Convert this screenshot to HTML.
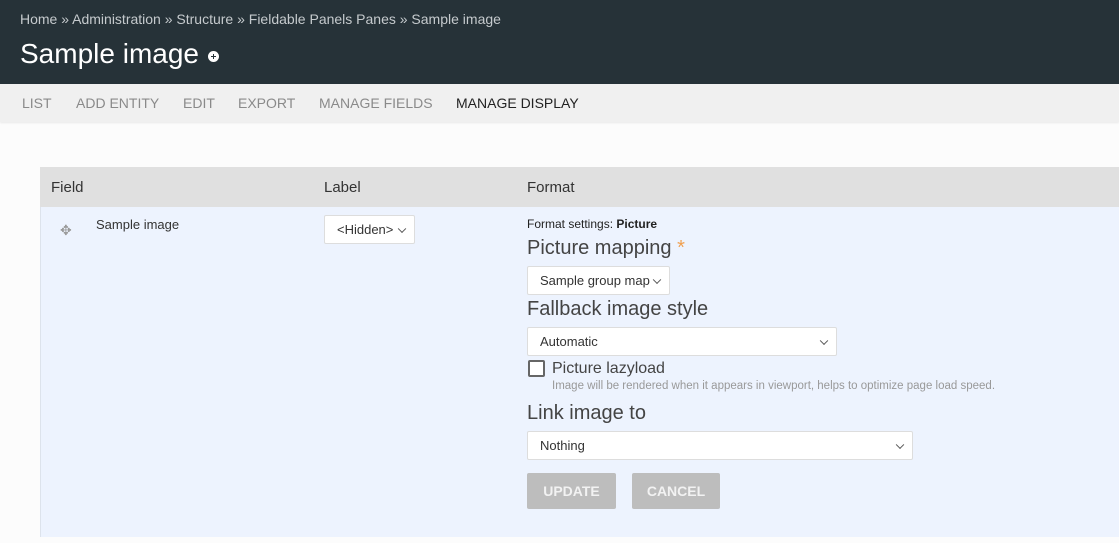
<!DOCTYPE html>
<html><head><style>
*{margin:0;padding:0;box-sizing:border-box}
body{width:1119px;height:543px;overflow:hidden;background:#fcfcfc;font-family:"Liberation Sans",sans-serif;position:relative}
.a{position:absolute;white-space:nowrap}
.sel{position:absolute;background:#fff;border:1px solid #ddd;border-radius:2px;font-size:13px;color:#333;padding-left:12px;display:flex;align-items:center}
.sel:after{content:"";position:absolute;right:9px;top:50%;width:5px;height:5px;border-right:1.5px solid #555;border-bottom:1.5px solid #555;transform:translateY(-70%) rotate(45deg)}
.btn{position:absolute;background:#bdbdbd;color:#f2f2f2;font-size:14px;font-weight:bold;display:flex;align-items:center;justify-content:center;border-radius:2px}
.h{font-size:20px;color:#444}
</style></head><body>
<div class="a" style="left:0;top:0;width:1119px;height:84px;background:#263238"></div>
<div class="a" style="left:20px;top:11px;font-size:14px;color:#c5cacd">Home » Administration » Structure » Fieldable Panels Panes » Sample image</div>
<div class="a" style="left:20px;top:38px;font-size:28px;color:#fff">Sample image</div>
<div class="a" style="left:208px;top:51px;width:11px;height:11px;border-radius:50%;background:#fff"></div>
<div class="a" style="left:211px;top:55.8px;width:5px;height:1.5px;background:#263238"></div>
<div class="a" style="left:212.8px;top:54px;width:1.5px;height:5px;background:#263238"></div>
<div class="a" style="left:0;top:84px;width:1119px;height:38px;background:#f0f0f0;box-shadow:0 1px 2px rgba(0,0,0,.08)"></div>
<div class="a" style="left:22px;top:95px;font-size:14px;color:#8a8a8a">LIST</div>
<div class="a" style="left:76px;top:95px;font-size:14px;color:#8a8a8a">ADD ENTITY</div>
<div class="a" style="left:183px;top:95px;font-size:14px;color:#8a8a8a">EDIT</div>
<div class="a" style="left:238px;top:95px;font-size:14px;color:#8a8a8a">EXPORT</div>
<div class="a" style="left:319px;top:95px;font-size:14px;color:#8a8a8a">MANAGE FIELDS</div>
<div class="a" style="left:456px;top:95px;font-size:14px;color:#222">MANAGE DISPLAY</div>
<div class="a" style="left:40px;top:167px;width:1079px;height:40px;background:#e0e0e0"></div>
<div class="a" style="left:51px;top:179px;font-size:15px;color:#333">Field</div>
<div class="a" style="left:324px;top:179px;font-size:15px;color:#333">Label</div>
<div class="a" style="left:527px;top:179px;font-size:15px;color:#333">Format</div>
<div class="a" style="left:40px;top:207px;width:1079px;height:330px;background:#edf3fe;border-left:1px solid #dde3ec"></div>
<div class="a" style="left:60px;top:222px;font-size:14px;color:#999">✥</div>
<div class="a" style="left:96px;top:217px;font-size:13px;color:#333">Sample image</div>
<div class="sel" style="left:324px;top:215px;width:91px;height:29px">&lt;Hidden&gt;</div>
<div class="a" style="left:527px;top:217px;font-size:12px;color:#222">Format settings: <b>Picture</b></div>
<div class="a h" style="left:527px;top:237px">Picture mapping <span style="color:#f0a050">*</span></div>
<div class="sel" style="left:527px;top:266px;width:143px;height:29px">Sample group map</div>
<div class="a h" style="left:527px;top:298px">Fallback image style</div>
<div class="sel" style="left:527px;top:327px;width:310px;height:29px">Automatic</div>
<div class="a" style="left:528px;top:360px;width:17px;height:17px;border:2px solid #666;border-radius:2px;background:#fff"></div>
<div class="a" style="left:552px;top:360px;font-size:16px;color:#444">Picture lazyload</div>
<div class="a" style="left:552px;top:380px;font-size:11.5px;color:#999">Image will be rendered when it appears in viewport, helps to optimize page load speed.</div>
<div class="a h" style="left:527px;top:402px">Link image to</div>
<div class="sel" style="left:527px;top:431px;width:386px;height:29px">Nothing</div>
<div class="btn" style="left:527px;top:473px;width:89px;height:36px">UPDATE</div>
<div class="btn" style="left:632px;top:473px;width:88px;height:36px">CANCEL</div>
</body></html>
